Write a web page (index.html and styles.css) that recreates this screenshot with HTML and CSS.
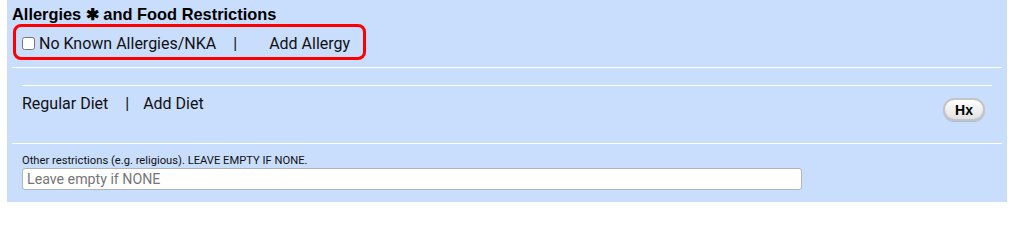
FILE: index.html
```html
<!DOCTYPE html>
<html lang="en">
<head>
<meta charset="utf-8">
<title>Allergies and Food Restrictions</title>
<link rel="stylesheet" href="styles.css">
</head>
<body>
<div class="panel">
  <h3 class="title">Allergies ✱ and Food Restrictions</h3>
  <div class="allergy-box">
    <label class="nka"><input type="checkbox" class="check"><span>No Known Allergies/NKA</span></label>
    <span class="sep sep-a">|</span>
    <a class="link">Add Allergy</a>
  </div>
  <div class="rule"></div>
  <div class="diet-section">
    <div class="rule"></div>
    <div class="diet-row">
      <div class="diet-links">
        <span>Regular Diet</span>
        <span class="sep sep-d">|</span>
        <a class="link">Add Diet</a>
      </div>
      <button class="hx">Hx</button>
    </div>
  </div>
  <div class="rule"></div>
  <div class="other">
    <div class="other-label">Other restrictions (e.g. religious). LEAVE EMPTY IF NONE.</div>
    <input class="other-input" type="text" placeholder="Leave empty if NONE">
  </div>
</div>
</body>
</html>
```

FILE: styles.css
```css
html, body {
  margin: 0;
  padding: 0;
  background: #ffffff;
}

body {
  font-family: Roboto, "Liberation Sans", Arial, sans-serif;
  color: #111111;
}

.panel {
  margin-left: 7px;
  width: 1000px;
  box-sizing: border-box;
  background: #c9ddfd;
  padding: 5px 5px 12px 5px;
}

.title {
  margin: 0;
  font-family: "Liberation Sans", Arial, sans-serif;
  font-weight: 700;
  font-size: 16.4px;
  line-height: 19px;
  color: #000000;
}

.allergy-box {
  display: flex;
  align-items: center;
  width: fit-content;
  margin-left: 1px;
  border: 3px solid #ff0000;
  border-radius: 8px;
  padding: 7px 13px 4px 6px;
  font-size: 16px;
  line-height: 19px;
}

.nka {
  display: flex;
  align-items: center;
}

.check {
  width: 13px;
  height: 13px;
  margin: 0 4px 0 0;
}

.sep {
  display: inline-block;
}

.sep-a {
  margin-left: 17px;
  margin-right: 32px;
}

.sep-d {
  margin-left: 17px;
  margin-right: 14px;
}

.link {
  color: #111111;
  text-decoration: none;
}

.rule {
  height: 0;
  border-top: 1px solid #ffffff;
}

.allergy-box + .rule {
  margin-top: 7px;
}

.diet-section {
  padding: 17px 10px 0 10px;
}

.diet-row {
  display: flex;
  justify-content: space-between;
  align-items: flex-start;
  height: 49px;
  padding-top: 8px;
  font-size: 16px;
  line-height: 19px;
}

.diet-links {
  display: flex;
}

.hx {
  margin: 4px 7px 0 0;
  width: 42px;
  height: 23px;
  padding: 0;
  border: 2px solid #c4c4c4;
  border-radius: 12px;
  background: linear-gradient(#ffffff, #e2e2e2);
  font-family: "Liberation Sans", Arial, sans-serif;
  font-weight: 700;
  font-size: 14px;
  color: #000000;
  box-shadow: 0 1px 1px rgba(0, 0, 0, 0.15);
}

.other {
  padding: 10px 10px 0 10px;
}

.other-label {
  font-size: 11.2px;
  line-height: 13px;
  color: #111111;
}

.other-input {
  display: block;
  margin-top: 1px;
  width: 780px;
  height: 22px;
  box-sizing: border-box;
  border: 1px solid #b3b3b3;
  border-radius: 3px;
  padding: 0 4px;
  background: #ffffff;
  font-family: Roboto, "Liberation Sans", Arial, sans-serif;
  font-size: 14.2px;
  color: #111111;
}

.other-input::placeholder {
  color: #767676;
}
```
